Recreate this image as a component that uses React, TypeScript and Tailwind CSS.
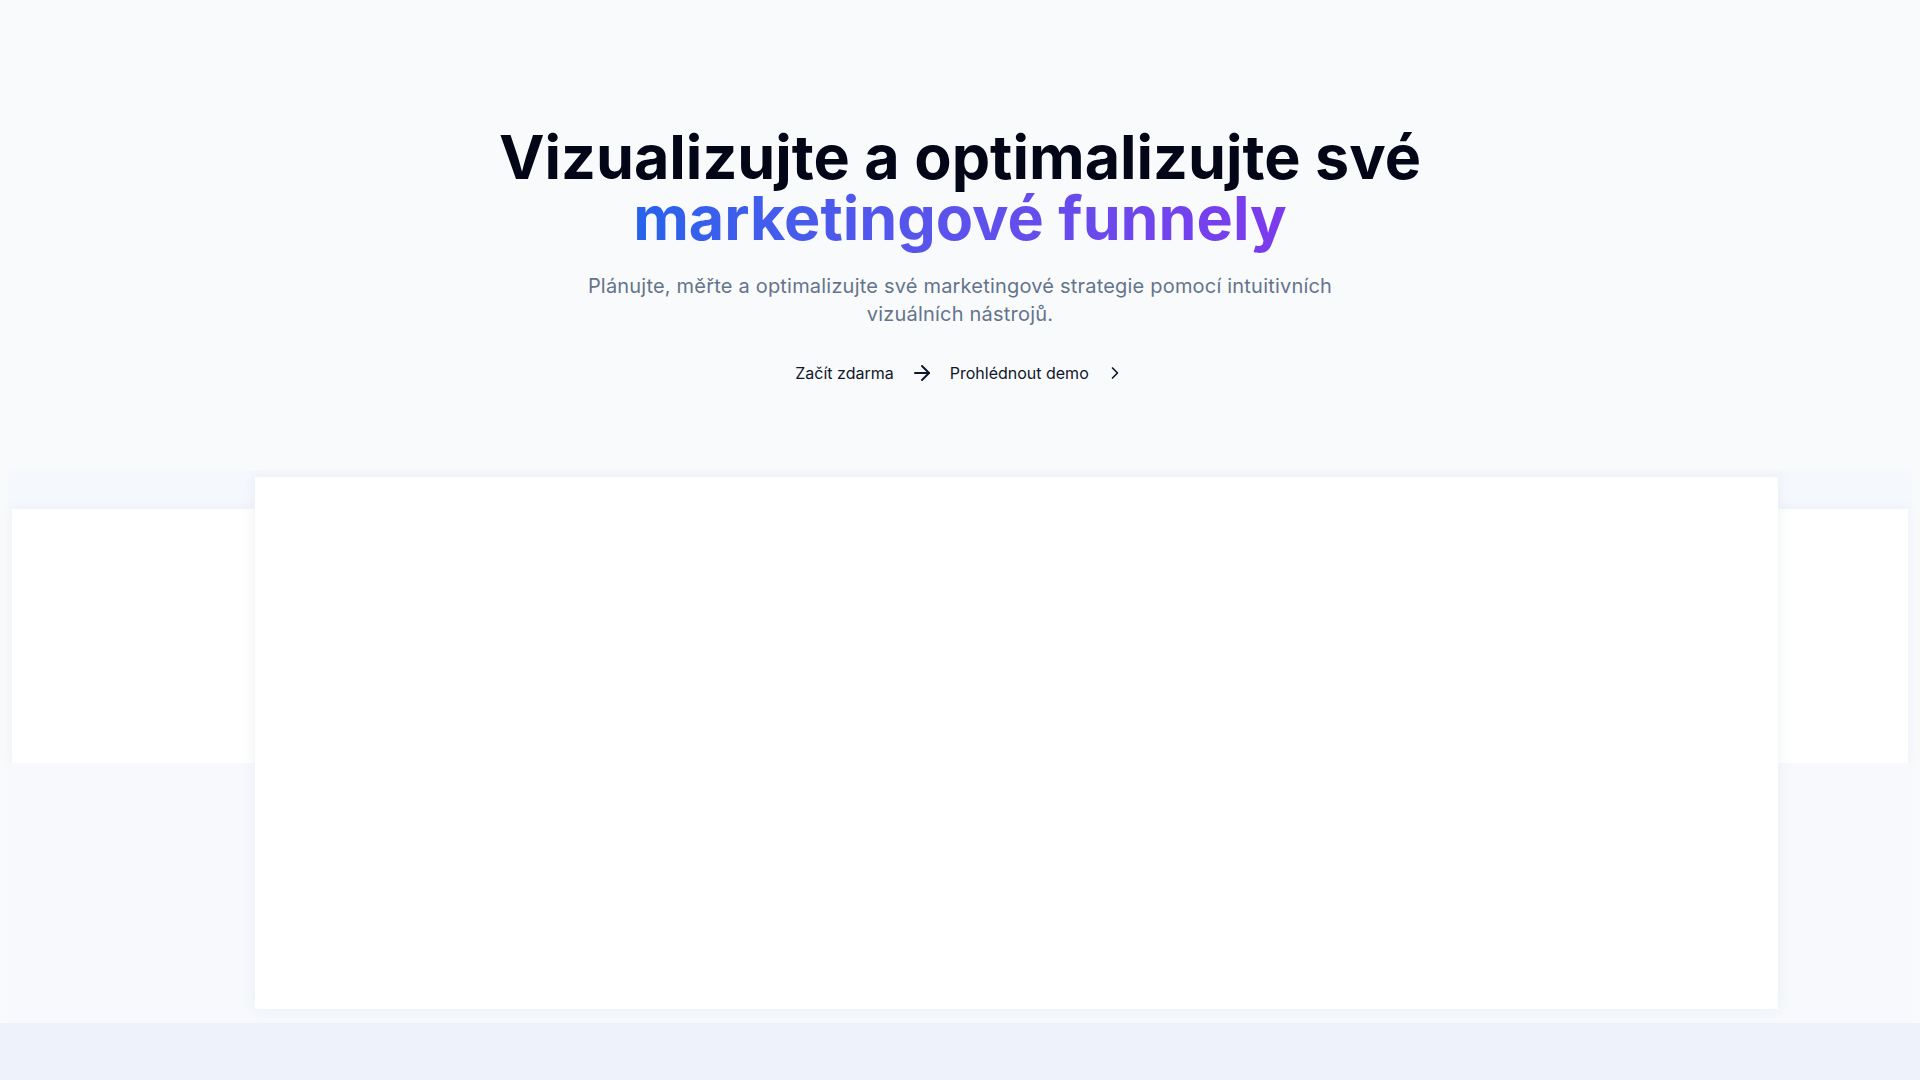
import { ArrowRight, ChevronRight } from 'lucide-react';

export default function App() {
  return (
    <div className="min-h-screen bg-[#eef2fb] font-['Inter',sans-serif]">
      <section className="flex flex-col items-center bg-[#f9fafc] pt-[127px]">
        <h1 className="text-center text-[61px] font-bold leading-[61px] text-[#020617]">
          <span className="block">Vizualizujte a optimalizujte své</span>
          <span className="inline-block bg-gradient-to-r from-[#2563eb] to-[#7c3aed] bg-clip-text pb-1 text-transparent">
            marketingové funnely
          </span>
        </h1>

        <p className="mt-[19px] max-w-3xl text-center text-xl leading-7 tracking-[0.01em] text-[#64748b]">
          Plánujte, měřte a optimalizujte své marketingové strategie pomocí intuitivních vizuálních nástrojů.
        </p>

        <div className="mt-[25px] flex items-center gap-4">
          <button type="button" className="flex h-10 items-center gap-4 text-base text-[#0f172a]">
            Začít zdarma
            <ArrowRight className="h-6 w-6" strokeWidth={2} />
          </button>
          <button type="button" className="flex h-10 items-center gap-4 text-base text-[#0f172a]">
            Prohlédnout demo
            <ChevronRight className="h-5 w-5" strokeWidth={2} />
          </button>
        </div>

        {/* blurred dashboard preview */}
        <div className="mt-[78px] grid h-[552px] w-full px-2">
          <div className="col-start-1 row-start-1 flex flex-col">
            <div className="h-[38px] bg-[#f5f8fd]" />
            <div className="mx-1 h-[254px] bg-white shadow-[0_0_10px_rgba(226,232,240,0.6)]" />
            <div className="flex-1 bg-[#f7f9fc]" />
          </div>
          <div className="col-start-1 row-start-1 ml-[247px] mr-[134px] mt-[6px] h-[532px] bg-white shadow-[0_0_12px_rgba(226,232,240,0.7)]" />
        </div>
      </section>
      <section className="h-[200px] bg-[#eef2fb]" />
    </div>
  );
}
